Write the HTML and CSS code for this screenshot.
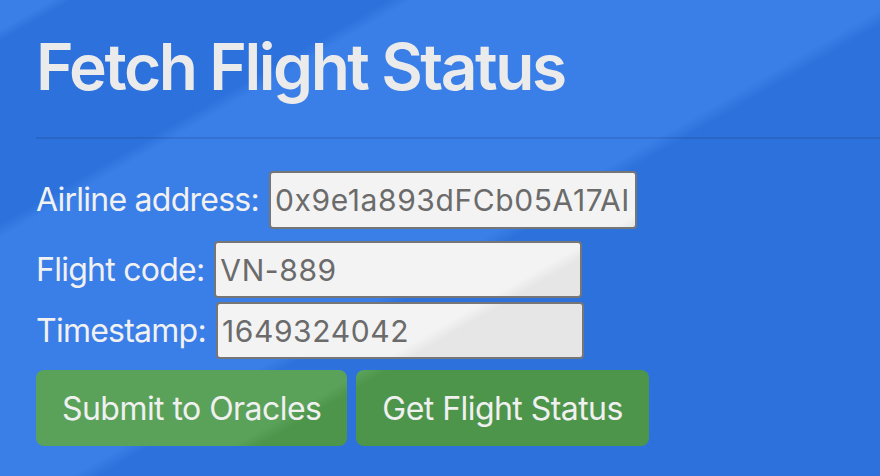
FILE: index.html
```html
<!DOCTYPE html>
<html lang="en">
<head>
<meta charset="utf-8">
<title>Fetch Flight Status</title>
<link rel="stylesheet" href="styles.css">
</head>
<body>
<div class="page">
  <h1 class="title">Fetch Flight Status</h1>
  <hr class="rule">
  <div class="row row-airline">
    <label class="label" for="airline">Airline address:</label>
    <input id="airline" class="field field-tall" type="text" value="0x9e1a893dFCb05A17AI">
  </div>
  <div class="row row-flight">
    <label class="label" for="flight">Flight code:</label>
    <input id="flight" class="field" type="text" value="VN-889">
  </div>
  <div class="row row-time">
    <label class="label" for="timestamp">Timestamp:</label>
    <input id="timestamp" class="field" type="text" value="1649324042">
  </div>
  <div class="actions">
    <button class="btn" type="button">Submit to Oracles</button>
    <button class="btn" type="button">Get Flight Status</button>
  </div>
</div>
</body>
</html>
```

FILE: styles.css
```css
html, body {
  margin: 0;
  height: 100%;
}

body {
  font-family: Inter, "Liberation Sans", sans-serif;
  color: #f0f0f0;
  overflow: hidden;
  background: linear-gradient(150deg,
    #3a7ee8 0, #3a7ee8 26px,
    #2d71dc 36px, #2d71dc 194px,
    #3a7ee8 206px, #3a7ee8 448px,
    #2d71dc 462px) fixed;
}

.page {
  padding: 28px 0 0 36px;
}

.title {
  margin: 0;
  font-size: 64px;
  font-weight: 600;
  line-height: 77px;
  letter-spacing: -2.45px;
  color: #ebebeb;
}

.rule {
  margin: 32px 0;
  height: 0;
  border: 0;
  border-top: 2px solid rgba(0, 0, 0, 0.1);
}

.row {
  display: flex;
  align-items: baseline;
  gap: 10px;
}

.row-airline { margin-top: 1px; }
.row-flight { margin-top: 12px; }
.row-time { margin-top: 4px; }

.label {
  font-size: 32px;
  line-height: 38px;
  letter-spacing: -0.75px;
  color: #f1f1f1;
}

.field {
  box-sizing: border-box;
  width: 368px;
  height: 57px;
  margin: 0;
  padding: 0 4px;
  border: 2px solid #767676;
  border-radius: 4px;
  font-family: inherit;
  font-size: 30px;
  letter-spacing: 0.6px;
  color: #6b6b6b;
  outline: none;
  background: linear-gradient(150deg, #f3f3f3 0, #f3f3f3 503px, #e6e6e6 515px) fixed;
}

.field-tall {
  height: 58px;
}

.actions {
  display: flex;
  gap: 9px;
  margin-top: 11px;
}

.btn {
  height: 76px;
  padding: 0 26px;
  border: 0;
  border-radius: 8px;
  font-family: inherit;
  font-size: 32px;
  letter-spacing: -0.55px;
  color: #f0f0f0;
  background: linear-gradient(150deg, #5aa259 0, #5aa259 503px, #4d954b 515px) fixed;
}
```
